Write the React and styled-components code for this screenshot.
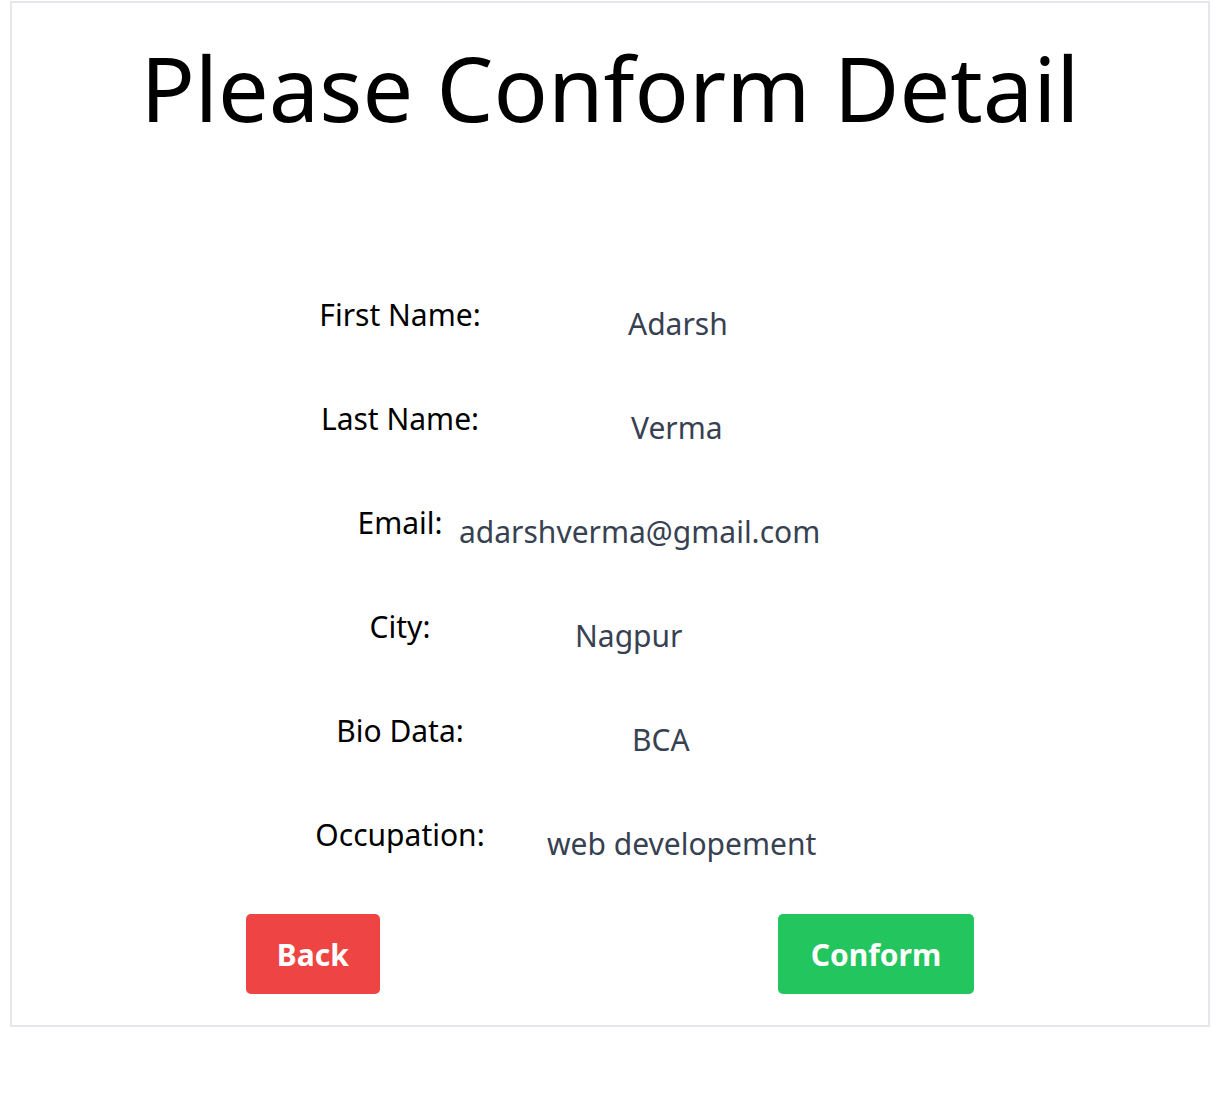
import React from 'react';
import styled, { createGlobalStyle } from 'styled-components';

const GlobalStyle = createGlobalStyle`
    html, body {
        margin: 0;
        padding: 0;
        background: #ffffff;
    }
    body {
        font-family: 'Noto Sans', 'Open Sans', sans-serif;
        color: #000000;
    }
`;

const Card = styled.div`
    box-sizing: border-box;
    width: 1200px;
    margin: 1px 0 0 10px;
    border: 2px solid #e5e7eb;
    padding: 39px 0 31px;
    display: flex;
    flex-direction: column;
`;

const Title = styled.h1`
    margin: 0;
    font-size: 90px;
    font-weight: 400;
    line-height: 90px;
    text-align: center;
`;

const DetailList = styled.div`
    margin-top: 165px;
    display: flex;
    flex-direction: column;
    gap: 59px;
`;

const Row = styled.div`
    display: flex;
    align-items: flex-start;
    padding-left: 348px;
`;

const Label = styled.div`
    width: 80px;
    flex: none;
    display: flex;
    justify-content: center;
    white-space: nowrap;
    font-size: 30px;
    line-height: 36px;
`;

const Value = styled.div`
    margin-top: 9px;
    margin-left: ${(p) => p.$indent}px;
    white-space: nowrap;
    font-size: 30px;
    line-height: 36px;
    color: #374151;
`;

const Actions = styled.div`
    margin-top: 52px;
    display: flex;
    justify-content: center;
    gap: 398px;
`;

const Button = styled.button`
    height: 80px;
    padding: 0 ${(p) => p.$pad}px;
    border: none;
    border-radius: 5px;
    background: ${(p) => p.$color};
    color: #ffffff;
    font-family: inherit;
    font-size: 30px;
    font-weight: 700;
    cursor: pointer;
`;

// offsets measured from the right edge of the label box
const details = [
    { label: 'First Name:', value: 'Adarsh', indent: 188 },
    { label: 'Last Name:', value: 'Verma', indent: 191 },
    { label: 'Email:', value: 'adarshverma@gmail.com', indent: 19 },
    { label: 'City:', value: 'Nagpur', indent: 135 },
    { label: 'Bio Data:', value: 'BCA', indent: 192 },
    { label: 'Occupation:', value: 'web developement', indent: 107 },
];

export default function App() {
    return (
        <>
            <GlobalStyle />
            <Card>
                <Title>Please Conform Detail</Title>
                <DetailList>
                    {details.map((d) => (
                        <Row key={d.label}>
                            <Label>{d.label}</Label>
                            <Value $indent={d.indent}>{d.value}</Value>
                        </Row>
                    ))}
                </DetailList>
                <Actions>
                    <Button $color="#ef4444" $pad={31}>Back</Button>
                    <Button $color="#22c55e" $pad={33}>Conform</Button>
                </Actions>
            </Card>
        </>
    );
}
